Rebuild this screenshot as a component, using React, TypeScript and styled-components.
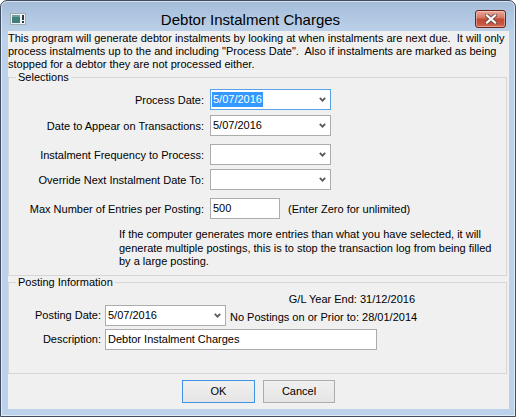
import React from 'react';
import styled, { createGlobalStyle } from 'styled-components';

const GlobalStyle = createGlobalStyle`
  html, body {
    margin: 0;
    padding: 0;
    background: #ffffff;
  }
  body {
    font-family: "Liberation Sans", Arial, sans-serif;
    font-size: 11px;
    color: #000;
  }
`;

const Window = styled.div`
  width: 516px;
  height: 417px;
  box-sizing: border-box;
  border: 1px solid #3f4d5e;
  border-radius: 7px 7px 0 0;
  background: linear-gradient(180deg, #a4bcd9 0px, #b4cae4 20px, #bcd2ea 34px, #bcd2ea 100%);
  box-shadow: inset 0 0 0 1px rgba(255, 255, 255, 0.55);
  display: flex;
  flex-direction: column;
  overflow: hidden;
`;

const TitleBar = styled.div`
  height: 30px;
  box-sizing: border-box;
  padding: 9px 9px 0 9px;
  display: flex;
  align-items: flex-start;
`;

const AppIcon = styled.svg`
  margin-top: 3px;
  flex: none;
`;

const Title = styled.div`
  flex: 1;
  text-align: center;
  font-size: 15px;
  line-height: 20px;
  color: #000;
`;

const CloseButton = styled.div`
  width: 31px;
  height: 18px;
  box-sizing: border-box;
  border: 1px solid #6e2218;
  border-radius: 3px;
  background: linear-gradient(180deg, #eaa798 0%, #d87a67 40%, #c24a35 52%, #c65440 80%, #d6735c 100%);
  box-shadow: inset 0 0 0 1px rgba(255, 255, 255, 0.35);
  display: flex;
  align-items: center;
  justify-content: center;
`;

const Client = styled.div`
  margin: 0 6px 0 7px;
  height: 378px;
  background: #f0f0f0;
  display: flex;
  flex-direction: column;
`;

const Intro = styled.div`
  padding-top: 1px;
  line-height: 13px;
`;

const GroupBox = styled.fieldset<{ $pb: number }>`
  margin: 0;
  width: 499px;
  min-width: 0;
  box-sizing: border-box;
  border: 1px solid #d6d6d6;
  padding: 0 0 ${(p) => p.$pb}px 0;
`;

const Legend = styled.legend`
  margin-left: 7px;
  padding: 0 2px;
  font-size: 11px;
  line-height: 13px;
`;

const Row = styled.div<{ $mt: number }>`
  display: flex;
  align-items: center;
  margin-top: ${(p) => p.$mt}px;
`;

const Label = styled.div<{ $w: number; $gap: number }>`
  width: ${(p) => p.$w}px;
  margin-right: ${(p) => p.$gap}px;
  text-align: right;
  white-space: nowrap;
`;

const Field = styled.div<{ $w: number; $focus?: boolean }>`
  width: ${(p) => p.$w}px;
  height: 21px;
  box-sizing: border-box;
  border: 1px solid ${(p) => (p.$focus ? '#5aa1e6' : '#acacac')};
  background: #ffffff;
  display: flex;
  align-items: center;
  padding-left: 1px;
  white-space: nowrap;
`;

const FieldText = styled.span<{ $selected?: boolean }>`
  padding: 0 1px;
  line-height: 15px;
  background: ${(p) => (p.$selected ? '#3399ff' : 'transparent')};
  color: ${(p) => (p.$selected ? '#ffffff' : '#000000')};
`;

const Chevron = styled.svg`
  margin-left: auto;
  margin-right: 4px;
  flex: none;
`;

const Hint = styled.div`
  margin-left: 8px;
`;

const Note = styled.div`
  margin: 9px 0 0 110px;
  line-height: 13.5px;
`;

const InfoLine = styled.div`
  width: 406px;
  margin-top: 4px;
  text-align: right;
  line-height: 12px;
`;

const SideText = styled.div`
  margin-left: 4px;
  padding-top: 3px;
`;

const ButtonBar = styled.div`
  display: flex;
  justify-content: center;
  gap: 8px;
  margin-top: 6px;
`;

const Button = styled.div<{ $w: number; $default?: boolean }>`
  width: ${(p) => p.$w}px;
  height: 23px;
  box-sizing: border-box;
  border: 1px solid ${(p) => (p.$default ? '#3d92e3' : '#adadad')};
  background: linear-gradient(180deg, #f0f0f0 0%, #e5e5e5 100%);
  display: flex;
  align-items: center;
  justify-content: center;
`;

const ComboArrow = () => (
  <Chevron width="7" height="5" viewBox="0 0 7 5">
    <polyline points="0.8,0.8 3.5,3.6 6.2,0.8" fill="none" stroke="#5a5a5a" strokeWidth="1.8" />
  </Chevron>
);

const Combo: React.FC<{ w: number; value?: string; focus?: boolean; selected?: boolean }> = ({ w, value, focus, selected }) => (
  <Field $w={w} $focus={focus}>
    {value && <FieldText $selected={selected}>{value}</FieldText>}
    <ComboArrow />
  </Field>
);

const App: React.FC = () => {
  return (
    <>
      <GlobalStyle />
      <Window>
        <TitleBar>
          <AppIcon width="16" height="12" viewBox="0 0 16 12">
            <rect x="0.5" y="0.5" width="15" height="11" fill="#eef2f4" stroke="#a4adb3" />
            <rect x="2" y="2" width="8" height="8" fill="#3f7f7c" />
            <rect x="2" y="2" width="8" height="2" fill="#6aa3a0" />
            <rect x="12" y="2" width="2" height="5" fill="#2a3a40" />
            <rect x="12" y="8" width="2" height="2" fill="#2a3a40" />
          </AppIcon>
          <Title>Debtor Instalment Charges</Title>
          <CloseButton>
            <svg width="12" height="10" viewBox="0 0 12 10">
              <path d="M2 1.5 L10 8.5 M10 1.5 L2 8.5" stroke="#6b4a45" strokeWidth="4" strokeLinecap="square" />
              <path d="M2 1.5 L10 8.5 M10 1.5 L2 8.5" stroke="#ffffff" strokeWidth="2.2" strokeLinecap="square" />
            </svg>
          </CloseButton>
        </TitleBar>
        <Client>
          <Intro>
            This program will generate debtor instalments by looking at when instalments are next due.&nbsp; It will only
            <br />
            process instalments up to the and including "Process Date".&nbsp; Also if instalments are marked as being
            <br />
            stopped for a debtor they are not processed either.
          </Intro>

          <GroupBox $pb={6}>
            <Legend>Selections</Legend>
            <Row $mt={5}>
              <Label $w={195} $gap={6}>Process Date:</Label>
              <Combo w={121} value="5/07/2016" focus selected />
            </Row>
            <Row $mt={5}>
              <Label $w={195} $gap={6}>Date to Appear on Transactions:</Label>
              <Combo w={121} value="5/07/2016" />
            </Row>
            <Row $mt={8}>
              <Label $w={195} $gap={6}>Instalment Frequency to Process:</Label>
              <Combo w={121} />
            </Row>
            <Row $mt={4}>
              <Label $w={195} $gap={6}>Override Next Instalment Date To:</Label>
              <Combo w={121} />
            </Row>
            <Row $mt={8}>
              <Label $w={195} $gap={6}>Max Number of Entries per Posting:</Label>
              <Field $w={70}>
                <FieldText>500</FieldText>
              </Field>
              <Hint>(Enter Zero for unlimited)</Hint>
            </Row>
            <Note>
              If the computer generates more entries than what you have selected, it will
              <br />
              generate multiple postings, this is to stop the transaction log from being filled
              <br />
              by a large posting.
            </Note>
          </GroupBox>

          <GroupBox $pb={23}>
            <Legend>Posting Information</Legend>
            <InfoLine>G/L Year End: 31/12/2016</InfoLine>
            <Row $mt={0}>
              <Label $w={92} $gap={4}>Posting Date:</Label>
              <Combo w={121} value="5/07/2016" />
              <SideText>No Postings on or Prior to: 28/01/2014</SideText>
            </Row>
            <Row $mt={3}>
              <Label $w={92} $gap={4}>Description:</Label>
              <Field $w={272}>
                <FieldText>Debtor Instalment Charges</FieldText>
              </Field>
            </Row>
          </GroupBox>

          <ButtonBar>
            <Button $w={73} $default>OK</Button>
            <Button $w={72}>Cancel</Button>
          </ButtonBar>
        </Client>
      </Window>
    </>
  );
};

export default App;
